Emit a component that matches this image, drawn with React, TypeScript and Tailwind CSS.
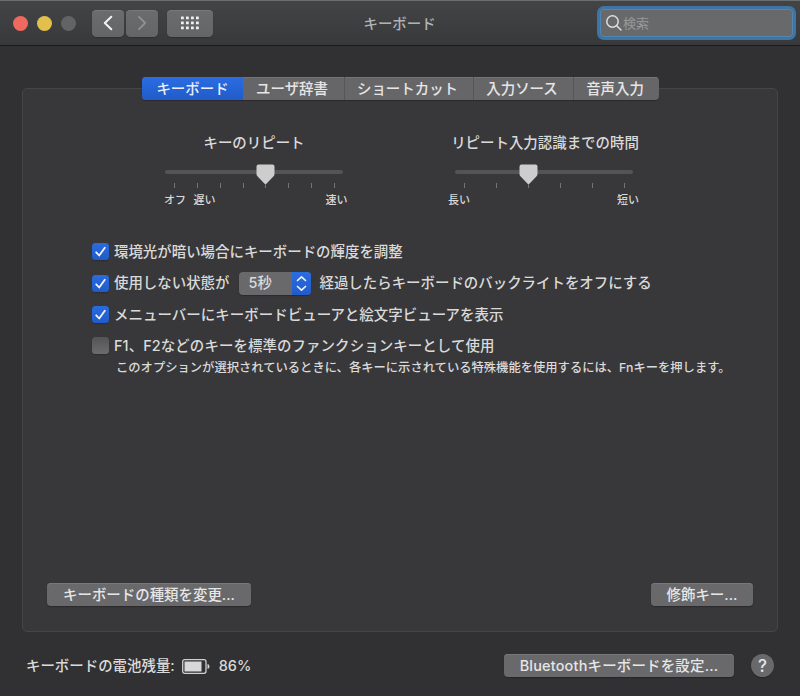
import React from 'react';

function Check({ on }: { on: boolean }) {
  return on ? (
    <span className="flex h-[17px] w-[17px] shrink-0 items-center justify-center rounded-[3.5px] bg-linear-to-b from-[#2a6be0] to-[#215bc8] shadow-[0_1px_1px_rgba(0,0,0,0.2)]">
      <svg width="17" height="17" viewBox="0 0 17 17" fill="none" stroke="#f1f4fb" strokeWidth="1.8" strokeLinecap="round" strokeLinejoin="round">
        <path d="M4.2 9.3 L7.2 12.5 L12.8 4.7" />
      </svg>
    </span>
  ) : (
    <span className="h-[17px] w-[17px] shrink-0 rounded-[3.5px] bg-linear-to-b from-[#545456] to-[#6c6c6e] shadow-[0_1px_1px_rgba(0,0,0,0.2)]" />
  );
}

function Slider({ ticks, thumb }: { ticks: number; thumb: string }) {
  return (
    <div className="relative h-[26px] w-[178px] pt-[6px]">
      <div className="h-[4px] rounded-full bg-[#545456]" />
      <div className="ml-[9px] mr-[8px] mt-[9px] flex justify-between">
        {Array.from({ length: ticks }, (_, i) => (
          <span key={i} className="h-[5px] w-px bg-[#747476]" />
        ))}
      </div>
      <svg className={'absolute top-0 ' + thumb} width="19" height="21" viewBox="0 0 19 21">
        <path d="M2.5 .5 H16.5 Q18.5 .5 18.5 2.5 V10 Q18.5 11.3 17.6 12.2 L10.4 19.7 Q9.5 20.6 8.6 19.7 L1.4 12.2 Q.5 11.3 .5 10 V2.5 Q.5 .5 2.5 .5Z" fill="#cdcdcd" />
      </svg>
    </div>
  );
}

function Button({ children, className }: { children: React.ReactNode; className: string }) {
  return (
    <button className={'flex h-[23px] items-center justify-center rounded-[4px] bg-[#69696b] text-[#e6e6e6] shadow-[inset_0_1px_0_#78787a,0_1px_1px_rgba(0,0,0,0.25)] ' + className}>
      {children}
    </button>
  );
}

const toolButton =
  'flex h-[27px] items-center justify-center rounded-[4.5px] bg-linear-to-b from-[#6b6c6e] to-[#646567] shadow-[inset_0_1px_0_#777879,0_1px_1px_rgba(0,0,0,0.2)]';

const tabs = [
  { label: 'キーボード', width: 'w-[101px]' },
  { label: 'ユーザ辞書', width: 'w-[101px]' },
  { label: 'ショートカット', width: 'w-[129px]' },
  { label: '入力ソース', width: 'w-[100px]' },
  { label: '音声入力', width: 'w-[86px]' },
];

export default function App() {
  return (
    <div className="flex h-[696px] w-[800px] flex-col overflow-hidden whitespace-nowrap bg-[#313133] font-['Inter','Noto_Sans_CJK_JP',sans-serif] text-[14.45px] font-medium leading-[20px] text-[#dadada]">
      <header className="flex h-[46px] shrink-0 items-center border-t border-b border-t-[#6c6d6e] border-b-[#19191b] bg-linear-to-b from-[#434446] to-[#38393b] pl-[13px] pr-[4px]">
        <div className="flex gap-[9px]">
          <span className="h-[15px] w-[15px] rounded-full bg-[#ee695e]" />
          <span className="h-[15px] w-[15px] rounded-full bg-[#e2c04b]" />
          <span className="h-[15px] w-[15px] rounded-full bg-[#626365]" />
        </div>
        <div className="ml-[15.5px] flex gap-[1.5px]">
          <button className={toolButton + ' w-[32.5px]'}>
            <svg width="10" height="16" viewBox="0 0 10 16" fill="none" stroke="#f4f4f4" strokeWidth="2" strokeLinecap="round" strokeLinejoin="round"><path d="M8.3 1.8 L1.8 8 L8.3 14.2" /></svg>
          </button>
          <button className={toolButton + ' w-[32.5px]'}>
            <svg width="10" height="16" viewBox="0 0 10 16" fill="none" stroke="#8f9091" strokeWidth="1.8" strokeLinecap="round" strokeLinejoin="round"><path d="M2 1.8 L8.2 8 L2 14.2" /></svg>
          </button>
        </div>
        <button className={toolButton + ' ml-[9px] w-[46px]'}>
          <svg width="18" height="14" viewBox="0 0 18 14" fill="#f0f0f0">
            {[0, 5, 10].map((y) => [0, 5, 10, 15].map((x) => <rect key={x + '-' + y} x={x} y={y + 0.5} width="2.8" height="2.8" rx=".4" />))}
          </svg>
        </button>
        <h1 className="ml-[150.5px] mt-px w-[74px] text-[14.45px] text-[#b2b2b3]">キーボード</h1>
        <label className="ml-auto flex h-[34px] w-[199px] items-center rounded-[7px] border-[3px] border-[#3f74a3] bg-[#68696b] pl-[6px] shadow-[inset_0_0_0_1px_#5086b4]">
          <svg width="16" height="16" viewBox="0 0 16 16" fill="none" stroke="#dededf" strokeWidth="1.5" strokeLinecap="round"><circle cx="6.5" cy="6.5" r="5.7" /><path d="M10.7 10.7 L15 15" /></svg>
          <span className="ml-px text-[13px] font-normal text-[#98999a]">検索</span>
        </label>
      </header>

      <main className="mx-[22px] mt-[42px] flex h-[544px] w-[756px] shrink-0 flex-col rounded-[5px] border border-[#454547] bg-[#38383a]">
        <nav className="-mt-[12px] ml-[119px] flex h-[23px] w-[517px] shrink-0 overflow-hidden rounded-[4px] bg-[#666668] shadow-[0_1px_1px_rgba(0,0,0,0.25)]">
          {tabs.map((t, i) => (
            <button
              key={t.label}
              className={
                'flex items-center justify-center ' + t.width +
                (i === 0 ? ' bg-linear-to-b from-[#2a6de2] to-[#215bc9] text-[#e9effc]' : ' pr-[3px] text-[#e6e6e6] shadow-[inset_0_1px_0_#747476]') +
                (i > 1 ? ' border-l border-[#565658]' : '')
              }
            >
              {t.label}
            </button>
          ))}
        </nav>

        <section className="mt-[33px] flex h-[78px] shrink-0 pl-[141px]">
          <div className="w-[290px]">
            <h2 className="w-[180px] text-center">キーのリピート</h2>
            <div className="mt-[11px] pl-px"><Slider ticks={8} thumb="left-[91px]" /></div>
            <div className="mt-[3px] flex text-[11px] leading-[14px]">
              <span className="w-[29.5px]">オフ</span><span>遅い</span><span className="ml-[110px]">速い</span>
            </div>
          </div>
          <div>
            <h2 className="w-[182px] text-center"><span className="-mx-4">リピート入力認識までの時間</span></h2>
            <div className="mt-[11px] pl-px"><Slider ticks={6} thumb="left-[63.5px]" /></div>
            <div className="-ml-[6px] mt-[3px] flex w-[191px] justify-between text-[11px] leading-[14px]"><span>長い</span><span>短い</span></div>
          </div>
        </section>

        <section className="ml-[69px] mt-[25px] flex flex-col">
          <div className="flex h-[31px] items-center gap-[5px]"><Check on />環境光が暗い場合にキーボードの輝度を調整</div>
          <div className="flex h-[32px] items-center gap-[5px]">
            <Check on />
            <span>使用しない状態が</span>
            <span className="ml-[4px] flex h-[23px] w-[72px] overflow-hidden rounded-[4px] bg-[#69696b] shadow-[0_1px_1px_rgba(0,0,0,0.25)]">
              <span className="flex w-[53px] items-center pl-[10px]">5秒</span>
              <span className="flex w-[19px] items-center justify-center bg-linear-to-b from-[#2a6de2] to-[#215bc9]">
                <svg width="11" height="17" viewBox="0 0 11 17" fill="none" stroke="#edf2fc" strokeWidth="1.7" strokeLinecap="round" strokeLinejoin="round"><path d="M1.5 5.5 L5.5 1.8 L9.5 5.5 M1.5 11.5 L5.5 15.2 L9.5 11.5" /></svg>
              </span>
            </span>
            <span className="ml-[4px]">経過したらキーボードのバックライトをオフにする</span>
          </div>
          <div className="flex h-[31px] items-center gap-[5px] tracking-[0.05px]"><Check on />メニューバーにキーボードビューアと絵文字ビューアを表示</div>
          <div className="flex h-[31px] items-center gap-[5px] tracking-[0.09px]"><Check on={false} />F1、F2などのキーを標準のファンクションキーとして使用</div>
          <p className="ml-[24px] -mt-[2px] text-[12.3px] leading-[18px]">このオプションが選択されているときに、各キーに示されている特殊機能を使用するには、Fnキーを押します。</p>
        </section>

        <div className="mb-[25px] ml-[24px] mr-[24px] mt-auto flex justify-between">
          <Button className="w-[204px]">キーボードの種類を変更...</Button>
          <Button className="w-[102px]">修飾キー...</Button>
        </div>
      </main>

      <footer className="mt-[22px] flex h-[23px] items-center pl-[26px] pr-[26px]">
        <span>キーボードの電池残量:</span>
        <svg className="ml-[7px] mt-[2px]" width="28" height="15" viewBox="0 0 28 15" fill="none">
          <rect x=".7" y=".7" width="23.3" height="13.6" rx="2" stroke="#d0d0d0" strokeWidth="1.3" />
          <rect x="2.5" y="2.5" width="17" height="10" fill="#d8d8d8" />
          <path d="M25.5 5 Q27.5 5.4 27.5 7.5 Q27.5 9.6 25.5 10Z" fill="#d0d0d0" />
        </svg>
        <span className="ml-[9px]">86%</span>
        <Button className="ml-auto w-[230px] tracking-[0.2px]">Bluetoothキーボードを設定...</Button>
        <button className="ml-[17px] flex h-[23px] w-[23px] items-center justify-center rounded-full bg-[#69696b] text-[17px] text-[#e6e6e6] shadow-[0_1px_1px_rgba(0,0,0,0.25)]">?</button>
      </footer>
    </div>
  );
}
